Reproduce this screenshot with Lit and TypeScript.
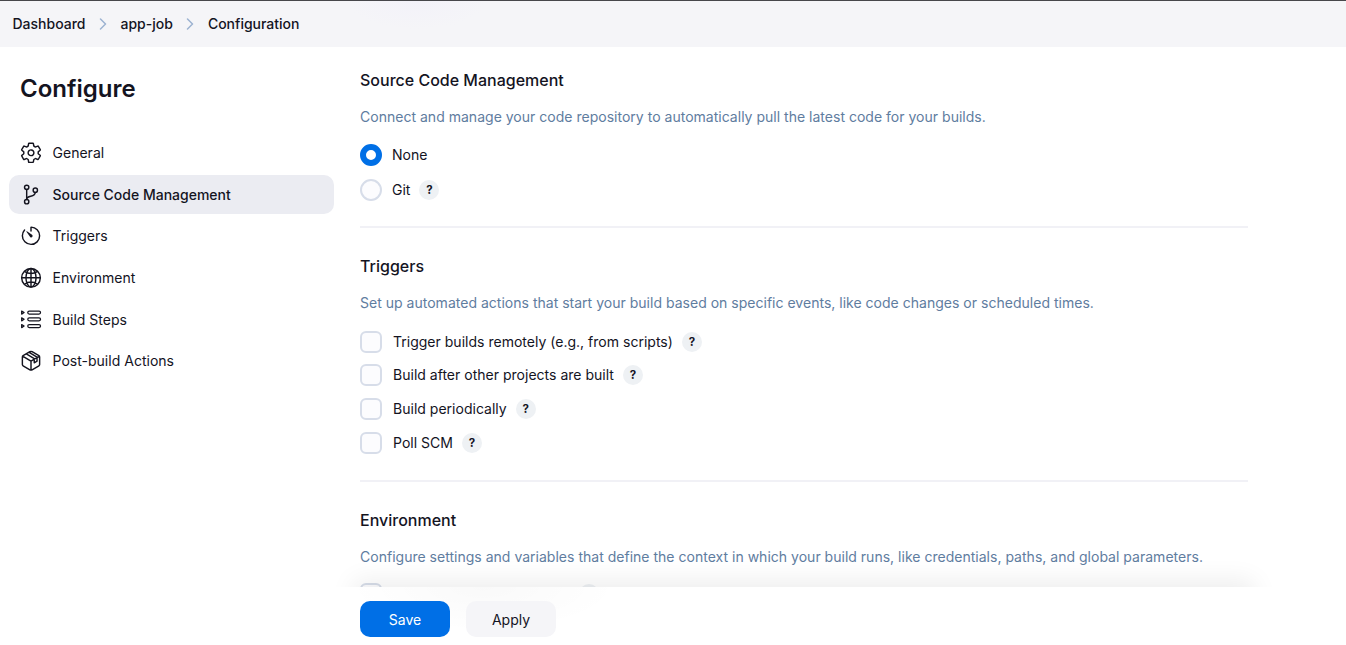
import { LitElement, html, svg, css } from 'lit';
import { customElement, property } from 'lit/decorators.js';

const icons: Record<string, unknown> = {
  gear: svg`<path d="M262.29 192.31a64 64 0 1057.4 57.4 64.13 64.13 0 00-57.4-57.4zM416.39 256a154.34 154.34 0 01-1.53 20.79l45.21 35.46a10.81 10.81 0 012.45 13.75l-42.77 74a10.81 10.81 0 01-13.14 4.59l-44.9-18.08a16.11 16.11 0 00-15.17 1.75A164.48 164.48 0 01325 400.8a15.94 15.94 0 00-8.82 12.14l-6.73 47.89a11.08 11.08 0 01-10.68 9.17h-85.54a11.11 11.11 0 01-10.69-8.87l-6.72-47.82a16.07 16.07 0 00-9-12.22 155.3 155.3 0 01-21.46-12.57 16 16 0 00-15.11-1.71l-44.89 18.07a10.81 10.81 0 01-13.14-4.58l-42.77-74a10.8 10.8 0 012.45-13.75l38.21-30a16.05 16.05 0 006-14.08c-.36-4.17-.58-8.33-.58-12.5s.21-8.27.58-12.35a16 16 0 00-6.07-13.94l-38.19-30A10.81 10.81 0 0149.48 186l42.77-74a10.81 10.81 0 0113.14-4.59l44.9 18.08a16.11 16.11 0 0015.17-1.75A164.48 164.48 0 01187 111.2a15.94 15.94 0 008.82-12.14l6.73-47.89A11.08 11.08 0 01213.23 42h85.54a11.11 11.11 0 0110.69 8.87l6.72 47.82a16.07 16.07 0 009 12.22 155.3 155.3 0 0121.46 12.57 16 16 0 0015.11 1.71l44.89-18.07a10.81 10.81 0 0113.14 4.58l42.77 74a10.8 10.8 0 01-2.45 13.75l-38.21 30a16.05 16.05 0 00-6.05 14.08c.33 4.14.55 8.3.55 12.47z"/>`,
  branch: svg`<circle cx="160" cy="90" r="48"/><circle cx="160" cy="410" r="48"/><circle cx="352" cy="154" r="48"/><path d="M160 362V138M352 202c0 128-192 48-192 160"/>`,
  timer: svg`<path d="M112.91 128A191.85 191.85 0 0064 254c-1.18 106.35 85.65 193.8 192 194 106.2.2 192-85.83 192-192 0-104.54-83.55-189.61-187.5-192a4.36 4.36 0 00-4.5 4.37V152"/><path fill="currentColor" stroke="none" d="M233.38 278.63l-79-113a8.13 8.13 0 0111.32-11.32l113 79a32.5 32.5 0 01-37.25 53.26 33.21 33.21 0 01-8.07-7.94z"/>`,
  globe: svg`<circle cx="256" cy="256" r="208"/><path d="M256 48c-58.07 0-112.67 93.13-112.67 208S197.93 464 256 464s112.67-93.13 112.67-208S314.07 48 256 48zM117.33 117.33c38.24 27.15 86.38 43.34 138.67 43.34s100.43-16.19 138.67-43.34M394.67 394.67c-38.24-27.15-86.38-43.34-138.67-43.34s-100.43 16.19-138.67 43.34M256 48v416M464 256H48"/>`,
  steps: svg`<g stroke-width="28"><rect x="184" y="62" width="284" height="68" rx="34"/><rect x="184" y="212" width="284" height="68" rx="34"/><rect x="184" y="362" width="284" height="68" rx="34"/><path d="M48 62v68l54-34zM48 212v68l54-34zM48 362v68l54-34z"/></g>`,
  box: svg`<path d="M448 341.37V170.61A32 32 0 00432.11 143l-152-88.46a47.94 47.94 0 00-48.24 0L79.89 143A32 32 0 0064 170.61v170.76A32 32 0 0079.89 369l152 88.46a48 48 0 0048.24 0l152-88.46A32 32 0 00448 341.37zM69 153.99l187 110 187-110M256 463.99v-200M152 105l176 104v92l62-36v-92L214 69"/>`,
};

@customElement('side-item')
class SideItem extends LitElement {
  @property() icon = '';
  @property() label = '';
  @property({ type: Boolean, reflect: true }) active = false;
  static styles = css`
    :host { display: flex; align-items: center; height: 39px; padding-left: 10px; gap: 9.5px; border-radius: 10px; box-sizing: border-box; }
    :host([active]) { background: #ebecf2; font-weight: 500; font-size: 14px; }
    svg { width: 24px; height: 24px; flex: none; fill: none; stroke: currentColor; stroke-width: 32; stroke-linecap: round; stroke-linejoin: round; }
  `;
  render() {
    return html`<svg viewBox="-11 -6 534 534">${icons[this.icon]}</svg><span>${this.label}</span>`;
  }
}

@customElement('option-row')
class OptionRow extends LitElement {
  @property() kind = 'checkbox';
  @property() label = '';
  @property({ type: Boolean }) checked = false;
  @property({ type: Boolean }) help = false;
  static styles = css`
    :host { display: flex; align-items: center; height: 22px; }
    .mark { width: 22px; height: 22px; box-sizing: border-box; border: 2px solid #d7dde9; background: #fcfcfe; flex: none; }
    .checkbox { border-radius: 6px; margin-right: 11px; }
    .radio { border-radius: 50%; margin-right: 10px; }
    .checked { border: 6.5px solid #006fe6; background: #fff; }
    .blank { width: 177px; }
    .help { width: 20px; height: 20px; border-radius: 50%; margin-left: 9px; background: #eef1f4; font-size: 11.5px; font-weight: 700; display: flex; align-items: center; justify-content: center; }
  `;
  render() {
    return html`<span class="mark ${this.kind} ${this.checked ? 'checked' : ''}"></span
      ><span class=${this.label ? '' : 'blank'}>${this.label}</span
      >${this.help ? html`<span class="help">${this.label ? '?' : ''}</span>` : ''}`;
  }
}

@customElement('app-root')
class AppRoot extends LitElement {
  static styles = css`
    :host { display: flex; flex-direction: column; height: 645px; overflow: hidden; box-sizing: border-box; background: #fff; color: #14141f; font: 14.04px/20px Inter, sans-serif; }
    header { flex: none; height: 47px; box-sizing: border-box; border-top: 1px solid #47474b; background: radial-gradient(70px 28px at 417px 0, #f3f2f9, #f5f5f8) #f5f5f8; display: flex; align-items: center; padding-left: 12.5px; font-weight: 500; font-size: 14px; }
    header svg { width: 8px; height: 12px; margin: 0 13.5px; fill: none; stroke: #9db3d1; stroke-width: 1.5; stroke-linecap: round; stroke-linejoin: round; }
    .body { display: flex; flex: 1; min-height: 0; }
    aside { width: 325px; padding-left: 9px; flex: none; }
    h1 { margin: 26px 0 0 11px; font-size: 24px; line-height: 32px; font-weight: 600; }
    nav { display: flex; flex-direction: column; gap: 2.7px; margin-top: 28.5px; }
    main { width: 888px; margin-left: 26px; display: flex; flex-direction: column; min-height: 0; }
    .form { height: 540px; overflow: hidden; flex: none; }
    h2 { margin: 0; font-size: 16px; line-height: 24px; font-weight: 500; }
    section { padding-top: 26px; }
    section + section { border-top: 2px solid #f1f1f6; }
    .scm { padding-top: 21px; height: 158px; }
    .triggers { height: 226px; }
    p { margin: 14px 0 0; line-height: 22px; color: #5f7d9f; }
    .radios { display: flex; flex-direction: column; gap: 13px; margin-top: 16px; }
    .checks { display: flex; flex-direction: column; gap: 11.67px; margin-top: 16.6px; }
    .env .checks { margin-top: 15px; }
    .bar { flex: none; height: 58px; display: flex; gap: 16px; padding-top: 14px; box-sizing: border-box; background: #fff; position: relative; }
    .shade { position: absolute; left: -24px; right: -24px; bottom: 100%; height: 32px; overflow: hidden; pointer-events: none; }
    .shade::after { content: ''; position: absolute; left: 24px; right: 24px; top: 32px; height: 46px; box-shadow: 0 0 26px 6px rgba(0, 0, 0, 0.075); }
    .glow { position: absolute; left: -12px; top: 0; width: 270px; height: 44px; background: radial-gradient(135px 44px at 50% 0, rgba(0, 0, 0, 0.025), transparent); pointer-events: none; }
    button { width: 90px; height: 36px; border: 0; border-radius: 10px; padding: 1px 0 0; font: inherit; color: inherit; background: #f5f5f8; position: relative; }
    .primary { background: #006fe6; color: #fff; }
  `;
  render() {
    const chevron = html`<svg viewBox="0 0 8 12"><path d="M1.5 1L6.5 6L1.5 11" /></svg>`;
    return html`
      <header><span>Dashboard</span>${chevron}<span>app-job</span>${chevron}<span>Configuration</span></header>
      <div class="body">
        <aside>
          <h1>Configure</h1>
          <nav>
            <side-item icon="gear" label="General"></side-item>
            <side-item icon="branch" label="Source Code Management" active></side-item>
            <side-item icon="timer" label="Triggers"></side-item>
            <side-item icon="globe" label="Environment"></side-item>
            <side-item icon="steps" label="Build Steps"></side-item>
            <side-item icon="box" label="Post-build Actions"></side-item>
          </nav>
        </aside>
        <main>
          <div class="form">
            <section class="scm">
              <h2>Source Code Management</h2>
              <p>Connect and manage your code repository to automatically pull the latest code for your builds.</p>
              <div class="radios">
                <option-row kind="radio" label="None" checked></option-row>
                <option-row kind="radio" label="Git" help></option-row>
              </div>
            </section>
            <section class="triggers">
              <h2>Triggers</h2>
              <p>Set up automated actions that start your build based on specific events, like code changes or scheduled times.</p>
              <div class="checks">
                <option-row label="Trigger builds remotely (e.g., from scripts)" help></option-row>
                <option-row label="Build after other projects are built" help></option-row>
                <option-row label="Build periodically" help></option-row>
                <option-row label="Poll SCM" help></option-row>
              </div>
            </section>
            <section class="env">
              <h2>Environment</h2>
              <p>Configure settings and variables that define the context in which your build runs, like credentials, paths, and global parameters.</p>
              <div class="checks">
                <option-row help></option-row>
              </div>
            </section>
          </div>
          <div class="bar">
            <div class="shade"></div>
            <div class="glow"></div>
            <button class="primary">Save</button>
            <button>Apply</button>
          </div>
        </main>
      </div>
    `;
  }
}
